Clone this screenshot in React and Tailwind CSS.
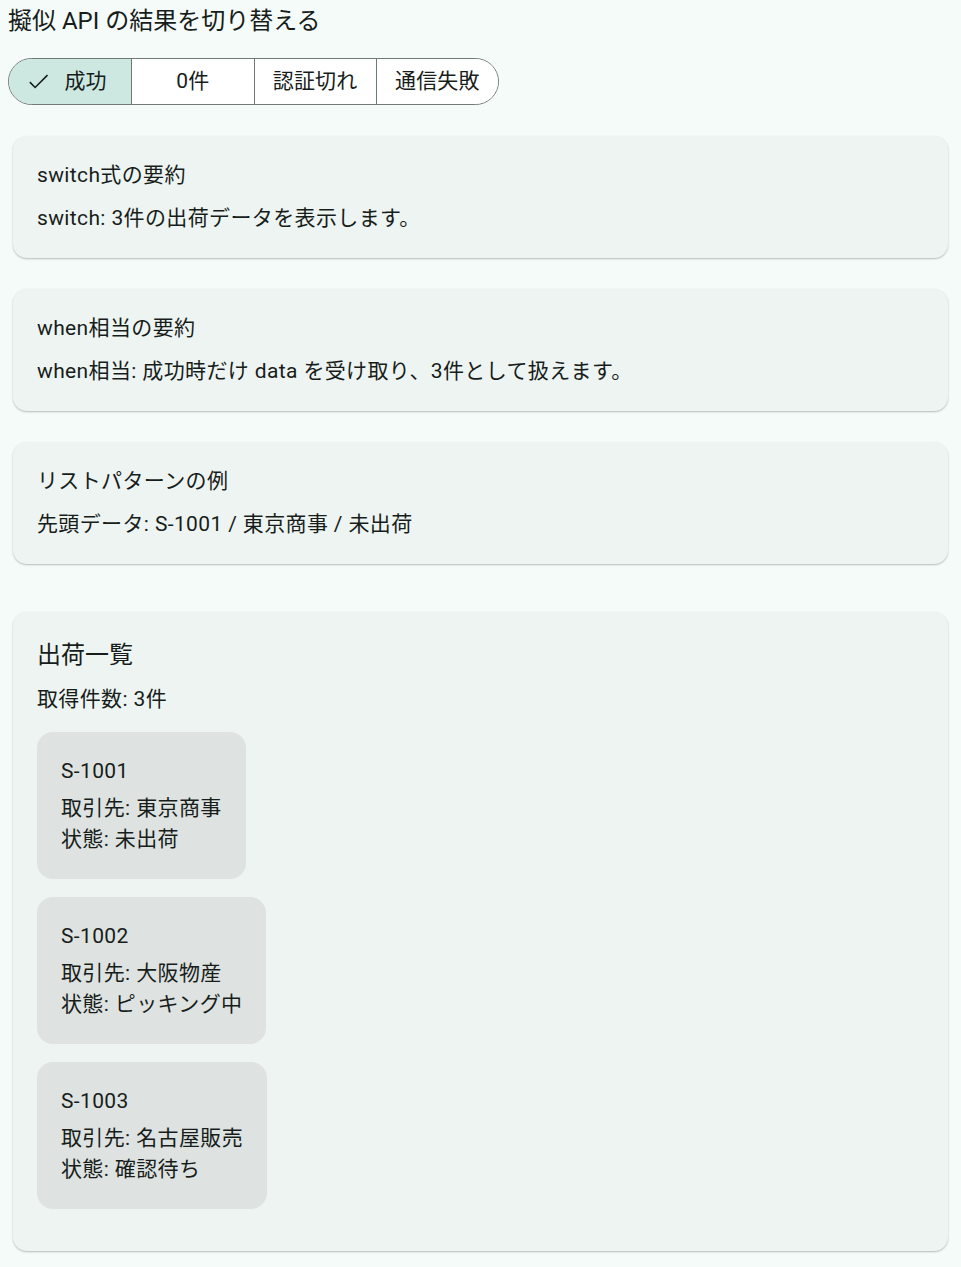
import React, { useState } from "react";

const font = { fontFamily: "Roboto, 'Noto Sans CJK JP', sans-serif" };

const segments = ["成功", "0件", "認証切れ", "通信失敗"];

const shipments = [
  { id: "S-1001", partner: "東京商事", status: "未出荷" },
  { id: "S-1002", partner: "大阪物産", status: "ピッキング中" },
  { id: "S-1003", partner: "名古屋販売", status: "確認待ち" },
];

function CheckIcon() {
  return (
    <svg width="27" height="27" viewBox="0 0 24 24" fill="none" stroke="currentColor" strokeWidth="1.4">
      <path d="M4.3 12.6l4.7 4.7L20 6.3" />
    </svg>
  );
}

function SummaryCard({ title, body }) {
  return (
    <div className="mx-[5px] rounded-[14px] bg-[#eef4f1] px-6 py-6 tracking-[0.37px] shadow-[0_1px_2px_rgba(0,0,0,0.25)]">
      <div className="text-[21px] leading-[31px]">{title}</div>
      <div className="mt-3 text-[21px] leading-[31px]">{body}</div>
    </div>
  );
}

export default function App() {
  const [selected, setSelected] = useState(0);

  return (
    <div className="min-h-screen bg-[#f4fbf8] px-2 pb-4 text-[#171d1b]" style={font}>
      <h1 className="pt-[6px] text-[24px] leading-[30px]">擬似 API の結果を切り替える</h1>

      <div className="mt-[22px] grid h-[47px] w-[491px] grid-cols-4 overflow-hidden rounded-full border border-[#6f7975]">
        {segments.map((label, i) => (
          <button
            key={label}
            onClick={() => setSelected(i)}
            className={
              "flex items-center justify-center gap-3 text-[21px] tracking-[0.15px] " +
              (i > 0 ? "border-l border-[#6f7975] " : "") +
              (selected === i ? "bg-[#cde8e1] pr-2" : "bg-white")
            }
          >
            {selected === i && <CheckIcon />}
            {label}
          </button>
        ))}
      </div>

      <div className="mt-[31px] flex flex-col gap-[31px]">
        <SummaryCard title="switch式の要約" body="switch: 3件の出荷データを表示します。" />
        <SummaryCard title="when相当の要約" body="when相当: 成功時だけ data を受け取り、3件として扱えます。" />
        <SummaryCard title="リストパターンの例" body="先頭データ: S-1001 / 東京商事 / 未出荷" />
      </div>

      <div className="mx-[5px] mt-[48px] rounded-[14px] bg-[#eef4f1] px-6 pt-6 pb-[42px] tracking-[0.37px] shadow-[0_1px_2px_rgba(0,0,0,0.25)]">
        <div className="text-[24px] leading-[38px] tracking-normal">出荷一覧</div>
        <div className="mt-[10px] text-[21px] leading-[31px]">取得件数: 3件</div>
        <div className="mt-[17px] flex flex-col items-start gap-[18px]">
          {shipments.map((s) => (
            <div key={s.id} className="rounded-[16px] bg-[#dee3e1] p-6 text-[21px] leading-[31px]">
              <div>{s.id}</div>
              <div className="mt-[6px]">取引先: {s.partner}</div>
              <div>状態: {s.status}</div>
            </div>
          ))}
        </div>
      </div>
    </div>
  );
}
